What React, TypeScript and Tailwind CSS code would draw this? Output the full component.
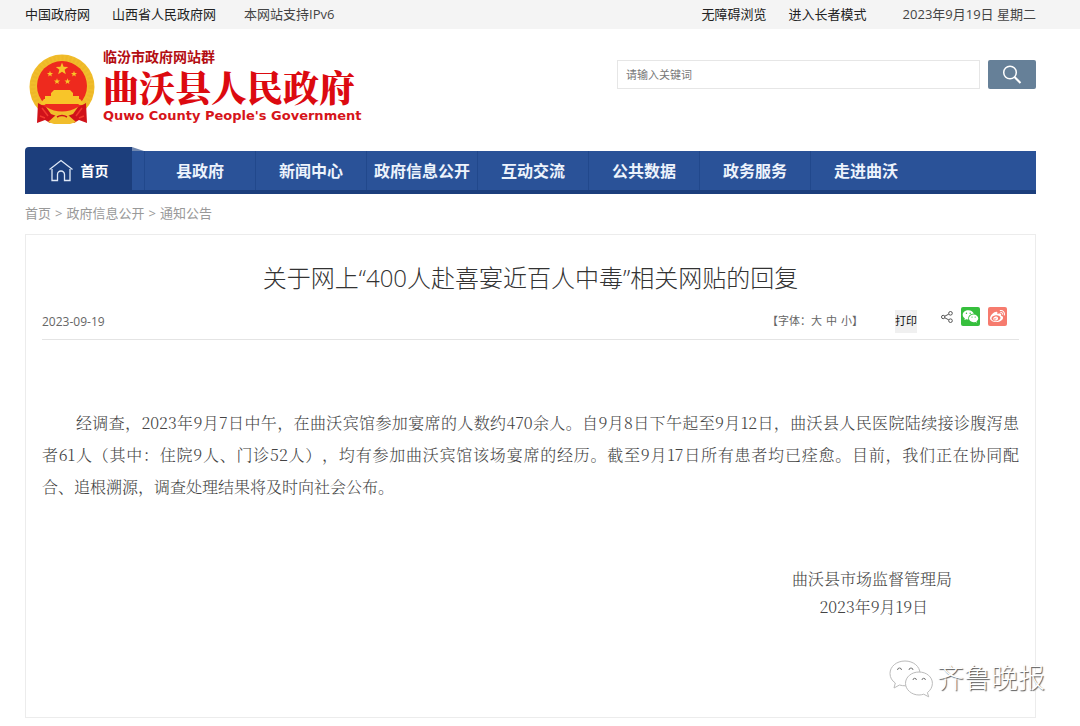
import React from 'react';
import { FaWeibo } from 'react-icons/fa';
import { RiWechatFill } from 'react-icons/ri';

const navItems = ['县政府', '新闻中心', '政府信息公开', '互动交流', '公共数据', '政务服务', '走进曲沃'];

const Star: React.FC<{ x: number; y: number; r: number }> = ({ x, y, r }) => {
  const points = Array.from({ length: 10 }, (_, i) => {
    const radius = i % 2 === 0 ? r : r * 0.42;
    const angle = (Math.PI / 5) * i - Math.PI / 2;
    return `${x + radius * Math.cos(angle)},${y + radius * Math.sin(angle)}`;
  }).join(' ');
  return <polygon points={points} fill="#f8c529" />;
};

const Emblem: React.FC = () => (
  <svg className="h-[70px] w-[66px] shrink-0" viewBox="0 0 66 70" aria-hidden="true">
    <circle cx="33" cy="33" r="32.5" fill="#f1bd2b" />
    <circle cx="33" cy="33" r="29" fill="none" stroke="#e0a31d" strokeWidth="5" strokeDasharray="2 2" opacity="0.2" />
    <circle cx="33" cy="32" r="25" fill="#ee2a1e" />
    <Star x={33} y={15} r={6.5} />
    <Star x={21} y={20} r={3.2} />
    <Star x={45} y={20} r={3.2} />
    <Star x={28} y={27.5} r={3.2} />
    <Star x={38.5} y={27.5} r={3.2} />
    <path d="M25 36h16l3 3v3h6v3H16v-3h6v-3z" fill="#f8c529" />
    <path d="M15 45h36l4 5H11z" fill="#f8c529" />
    <path d="M11 51h44l-6 7q-16 6-32 0z" fill="#ee2a1e" />
    <path d="M9 49l9 5q15 9 30 0l9-5 1 20-8-3-5 3-8-6h-8l-8 6-5-3-8 3z" fill="#d0121a" />
    <path d="M17 53q16 9 32 0l-5 7q-11 5-22 0z" fill="#f1bd2b" />
    <path d="M19 68l8-7 6-1 6 1 8 7-6 2H25z" fill="#f1bd2b" />
    <path d="M13 54l6 8M53 54l-6 8M11 62l5 2M55 62l-5 2" stroke="#f3392e" strokeWidth="1.5" />
    <path d="M28 63q5-3 10 0" fill="none" stroke="#d0121a" strokeWidth="1.5" />
  </svg>
);

const HomeIcon: React.FC = () => (
  <svg className="h-6 w-6" viewBox="0 0 24 24" fill="none" stroke="#dfe8f6" strokeWidth="1.3" aria-hidden="true">
    <path d="M.500 10.500L12 1.500l11.500 9" />
    <path d="M3 10v11.500h5.500v-6a3.500 3.500 0 0 1 7 0v6H21V10" />
  </svg>
);

const ShareIcon: React.FC = () => (
  <svg className="h-3 w-3" viewBox="0 0 12 12" fill="none" stroke="#555" strokeWidth="1" aria-hidden="true">
    <circle cx="2.200" cy="6" r="1.700" />
    <circle cx="9.500" cy="2.300" r="1.800" />
    <circle cx="9.500" cy="9.700" r="1.800" />
    <path d="M3.800 5.200l4-2.100M3.800 6.800l4 2.100" />
  </svg>
);

const TopBar: React.FC = () => (
  <div className="bg-[#f4f4f4] pl-[25px] pr-[44px]">
    <div className="flex h-[29px] items-center text-[13px] text-[#222]">
      <a href="#">中国政府网</a>
      <a href="#" className="ml-[22px]">山西省人民政府网</a>
      <span className="ml-7 text-[#444]">本网站支持IPv6</span>
      <a href="#" className="ml-auto">无障碍浏览</a>
      <a href="#" className="ml-[22px]">进入长者模式</a>
      <span className="ml-9 text-[#444]">2023年9月19日 星期二</span>
    </div>
  </div>
);

const Header: React.FC = () => (
  <header className="flex h-[118px] items-start justify-between">
    <a href="#" className="ml-1 mt-5 flex items-end gap-2">
      <Emblem />
      <div className="whitespace-nowrap">
        <p className="text-[14px] font-bold leading-4 text-[#b30d12]">临汾市政府网站群</p>
        <h1 className="font-[Noto_Serif_CJK_SC,Noto_Sans_CJK_SC,serif] text-[36px] font-black leading-[43px] text-[#dc0a10]">
          曲沃县人民政府
        </h1>
        <p className="font-[DejaVu_Sans,sans-serif] text-[13px] font-bold leading-4 text-[#d6141a]">
          Quwo County People's Government
        </p>
      </div>
    </a>
    <form className="mt-[31px] flex w-[419px] gap-2" onSubmit={(e) => e.preventDefault()}>
      <input
        type="text"
        aria-label="请输入关键词"
        placeholder="请输入关键词"
        className="h-[29px] min-w-0 flex-1 border border-[#e6e6e6] px-2 text-[11px] outline-none placeholder:text-[#777]"
      />
      <button type="submit" aria-label="搜索" className="flex h-[29px] w-12 items-center justify-center rounded-xs bg-[#668098]">
        <svg className="h-5 w-5" viewBox="0 0 20 20" fill="none" stroke="#fff" strokeWidth="1.5" aria-hidden="true">
          <circle cx="8" cy="7.500" r="6.300" />
          <path d="M12.500 12l6 6" strokeWidth="2" />
        </svg>
      </button>
    </form>
  </header>
);

const NavBar: React.FC = () => (
  <nav className="flex h-[47px] items-end text-[16px] font-bold text-[#edf3fc]">
    <a href="#" className="flex h-full w-[107px] items-center justify-center gap-2 rounded-tl bg-[#1c3e7c]">
      <HomeIcon />
      <span className="text-[14px] text-white">首页</span>
    </a>
    <div className="h-full w-3">
      <svg className="block h-1 w-3" viewBox="0 0 12 4" aria-hidden="true">
        <path d="M0 0l12 4H0z" fill="#7188b0" />
      </svg>
      <div className="h-[43px] border-b-4 border-[#1c3e7c] bg-[#2a5298]" />
    </div>
    <div className="flex h-[43px] flex-1 border-b-4 border-[#1c3e7c] bg-[#2a5298]">
      {navItems.map((item) => (
        <a key={item} href="#" className="flex w-[111px] items-center justify-center whitespace-nowrap border-l border-[#21488c]">
          {item}
        </a>
      ))}
    </div>
  </nav>
);

const Article: React.FC = () => (
  <article className="min-h-[484px] border border-[#ececec] px-4 pt-[23px]">
    <h2 className="text-center text-[24px] font-light leading-10 text-[#333]">
      关于网上“400人赴喜宴近百人中毒”相关网贴的回复
    </h2>
    <div className="flex h-[42px] items-center border-b border-[#e4e4e4] text-[11px] text-[#666]">
      <time className="mt-1.5 text-[12px]">2023-09-19</time>
      <div className="ml-auto mt-1.5 flex items-center">
        <span>【字体：</span>
        <button type="button">大</button>
        <button type="button" className="ml-1">中</button>
        <button type="button" className="ml-1">小</button>
        <span>】</span>
      </div>
      <button type="button" className="ml-8 mt-1.5 h-[23px] bg-[#f0f0f0] text-[#111]">打印</button>
      <div className="mb-1 ml-6 mr-3 flex items-center gap-2">
        <ShareIcon />
        <a href="#" aria-label="微信" className="flex h-[19px] w-[19px] items-center justify-center rounded-xs bg-[#36bf3d] text-white">
          <RiWechatFill size={17} />
        </a>
        <a href="#" aria-label="微博" className="flex h-[19px] w-[19px] items-center justify-center rounded-xs bg-[#f67b6e] text-white">
          <FaWeibo size={15} />
        </a>
      </div>
    </div>
    <div className="mt-[67px] font-[Noto_Serif_CJK_SC,Noto_Sans_CJK_SC,serif] text-[16px] font-light text-[#444] [text-spacing-trim:space-all]">
      <p className="text-justify indent-[34px] leading-8 [text-align-last:justify]">
        经调查，2023年9月7日中午，在曲沃宾馆参加宴席的人数约470余人。自9月8日下午起至9月12日，曲沃县人民医院陆续接诊腹泻患
        <br />
        者61人（其中：住院9人、门诊52人），均有参加曲沃宾馆该场宴席的经历。截至9月17日所有患者均已痊愈。目前，我们正在协同配
        <br />
        <span className="inline-block w-full indent-0 [text-align-last:left]">合、追根溯源，调查处理结果将及时向社会公布。</span>
      </p>
      <div className="mr-[67px] mt-[62px] text-right leading-7">
        <p>曲沃县市场监督管理局</p>
        <p className="mr-6">2023年9月19日</p>
      </div>
    </div>
  </article>
);

export default function App() {
  return (
    <div className="relative min-h-screen bg-white pb-2 font-[Open_Sans,Noto_Sans_CJK_SC,sans-serif]">
      <TopBar />
      <div className="pl-[25px] pr-[44px]">
        <Header />
        <NavBar />
        <div className="flex h-10 items-center gap-1 text-[13px] text-[#999]">
          <a href="#">首页</a>
          <span>&gt;</span>
          <a href="#">政府信息公开</a>
          <span>&gt;</span>
          <a href="#">通知公告</a>
        </div>
        <Article />
      </div>

      {/* Watermark */}
      <div className="absolute bottom-7 right-[35px] flex items-center gap-1">
        <svg className="h-10 w-11" viewBox="0 0 44 40" fill="#fff" stroke="#bbb" strokeWidth="1" aria-hidden="true">
          <path d="M16 3C7.500 3 1 8.500 1 15.500c0 4 2 7.300 5.300 9.500L5 30l5.500-3c2 .6 4 .8 6.500.8C24 27.500 31 22 31 15.500 31 8.500 24.500 3 16 3z" />
          <path d="M30 14c-7.500 0-13.500 5-13.500 11.300S22.500 37 30 37c1.700 0 3.200-.3 4.700-.8l5 2.600-1.300-4.200c3-2.200 5-5.500 5-9.300C43.400 19 37.500 14 30 14z" />
          <path d="M8.500 12a2 2 0 0 1 4 0M20 12a2 2 0 0 1 4 0M24 22a1.700 1.700 0 0 1 3.400 0M33 22a1.700 1.700 0 0 1 3.400 0" stroke="#777" />
        </svg>
        <span className="text-[27px] font-light leading-10 text-white [text-shadow:1px_1px_1px_#555]">齐鲁晚报</span>
      </div>
    </div>
  );
}
